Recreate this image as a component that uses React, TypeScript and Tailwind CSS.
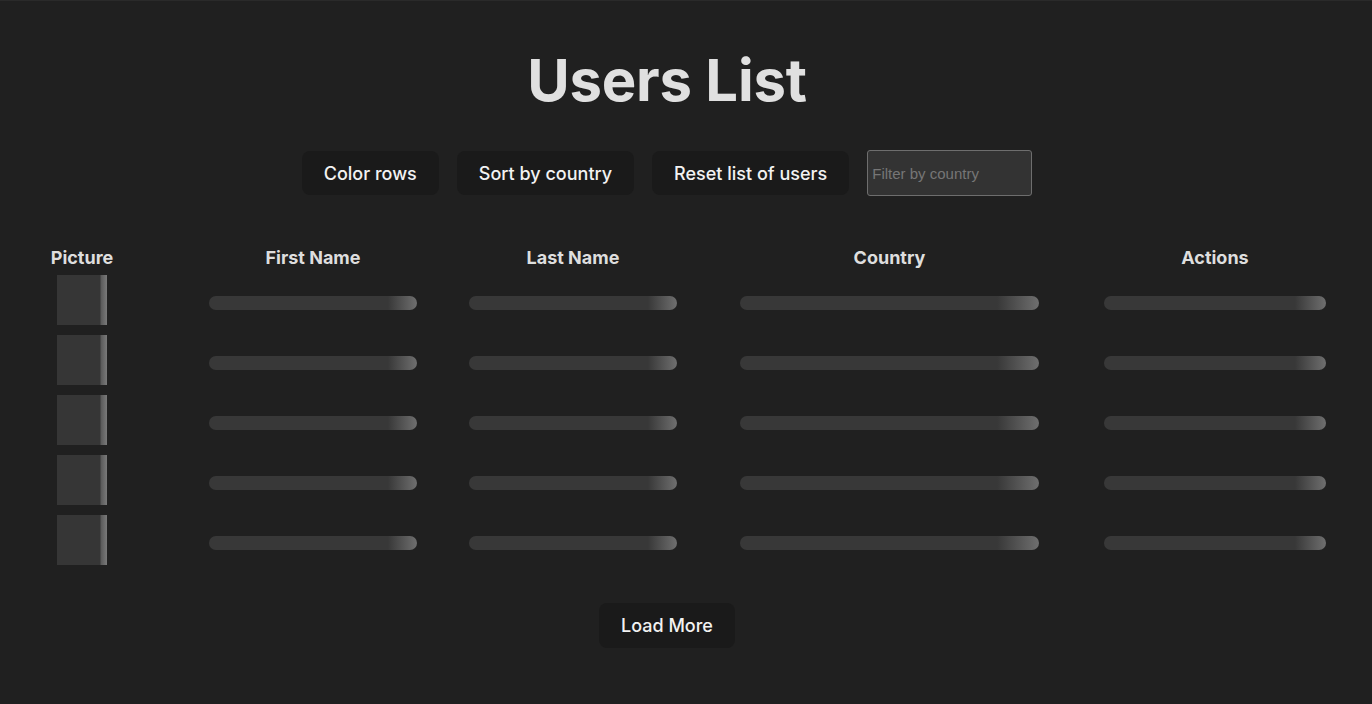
import React from "react";

const rows = [0, 1, 2, 3, 4];

function Bar({ w }: { w: string }) {
  return (
    <div
      className={`${w} h-[14px] mt-[5px] rounded-full bg-[linear-gradient(90deg,#383838_0%,#383838_86%,#6f6f6f_100%)]`}
    />
  );
}

export default function App() {
  return (
    <div
      className="min-h-[704px] w-full bg-[#202020] text-[#e3e3e3] border-t border-t-[#2a2a2a]"
      style={{ fontFamily: "Inter, 'Noto Sans', sans-serif" }}
    >
      <div className="w-[1334px] flex flex-col items-center">
        <h1 className="mt-[50px] text-[58px] leading-[58px] font-bold text-[#e0e0e0] tracking-[-0.2px]">
          Users List
        </h1>
        <div className="mt-[41px] flex items-center gap-[18px]">
          <button className="h-[44px] px-[22px] rounded-[8px] bg-[#1a1a1a] text-[18px] font-medium text-[#f2f2f2]">
            Color rows
          </button>
          <button className="h-[44px] px-[22px] rounded-[8px] bg-[#1a1a1a] text-[18px] font-medium text-[#f2f2f2]">
            Sort by country
          </button>
          <button className="h-[44px] px-[22px] rounded-[8px] bg-[#1a1a1a] text-[18px] font-medium text-[#f2f2f2]">
            Reset list of users
          </button>
          <input
            placeholder="Filter by country"
            className="h-[46px] w-[165px] px-[4px] rounded-[3px] border border-[#6e6e6e] bg-[#333333] text-[15px] text-[#ddd] placeholder:text-[#767676] outline-none"
            style={{ fontFamily: "'Liberation Sans', Arial, sans-serif" }}
          />
        </div>
      </div>

      <div className="mt-[50px] pl-[15px] grid grid-cols-[134px_60px_208px_52px_208px_63px_299px_65px_222px] text-[18px] font-bold text-[#dedede] leading-[24px]">
        <div className="text-center">Picture</div>
        <div />
        <div className="text-center">First Name</div>
        <div />
        <div className="text-center">Last Name</div>
        <div />
        <div className="text-center">Country</div>
        <div />
        <div className="text-center">Actions</div>
      </div>

      <div className="mt-[5px] pl-[15px] flex flex-col gap-[10px]">
        {rows.map((r) => (
          <div
            key={r}
            className="grid grid-cols-[134px_60px_208px_52px_208px_63px_299px_65px_222px] h-[50px] items-center"
          >
            <div className="flex justify-center">
              <div className="w-[50px] h-[50px] bg-[linear-gradient(90deg,#363636_0%,#363636_86%,#5a5a5a_88%,#7a7a7a_100%)]" />
            </div>
            <div />
            <Bar w="w-[208px]" />
            <div />
            <Bar w="w-[208px]" />
            <div />
            <Bar w="w-[299px]" />
            <div />
            <Bar w="w-[222px]" />
          </div>
        ))}
      </div>

      <div className="w-[1334px] flex justify-center mt-[38px]">
        <button className="h-[45px] px-[22px] rounded-[8px] bg-[#1a1a1a] text-[18px] font-medium text-[#f2f2f2]">
          Load More
        </button>
      </div>
    </div>
  );
}
